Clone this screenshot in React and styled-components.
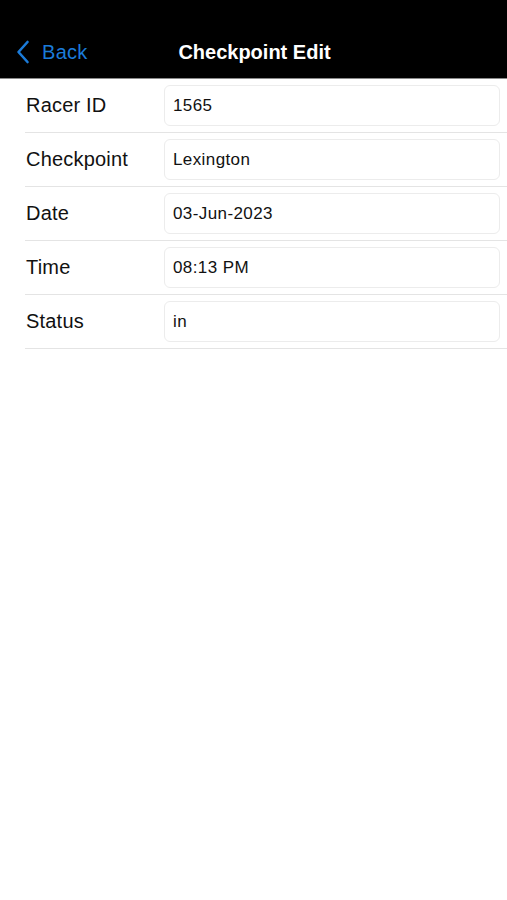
import React from "react";
import styled, { createGlobalStyle } from "styled-components";

const GlobalStyle = createGlobalStyle`
  body {
    margin: 0;
    background: #fff;
    font-family: "Liberation Sans", Arial, sans-serif;
  }
`;

const fields = [
  { label: "Racer ID", value: "1565" },
  { label: "Checkpoint", value: "Lexington" },
  { label: "Date", value: "03-Jun-2023" },
  { label: "Time", value: "08:13 PM" },
  { label: "Status", value: "in" },
];

function App() {
  return (
    <Screen>
      <GlobalStyle />
      <NavBar>
        <BackButton>
          <svg width="14" height="24" viewBox="0 0 14 24">
            <polyline
              points="11.5,2 2.5,12 11.5,22"
              fill="none"
              stroke="#1b7bd9"
              strokeWidth="2.6"
              strokeLinecap="round"
              strokeLinejoin="round"
            />
          </svg>
          <span>Back</span>
        </BackButton>
        <Title>Checkpoint Edit</Title>
      </NavBar>
      <Form>
        {fields.map((f) => (
          <Row key={f.label}>
            <Label>{f.label}</Label>
            <Field>{f.value}</Field>
          </Row>
        ))}
      </Form>
    </Screen>
  );
}

export default App;

const Screen = styled.div`
  width: 507px;
  min-height: 900px;
  background: #fff;
`;

const NavBar = styled.div`
  height: 79px;
  background: #000;
  border-bottom: 1px solid #8a8a8a;
  position: relative;
  display: flex;
  align-items: flex-end;
  justify-content: center;
  padding-bottom: 14px;
  padding-left: 2px;
  box-sizing: border-box;
`;

const BackButton = styled.div`
  position: absolute;
  left: 16px;
  bottom: 14px;
  display: flex;
  align-items: center;
  gap: 12px;
  color: #1b7bd9;
  font-size: 20px;
  line-height: 24px;
  letter-spacing: 0.3px;

  svg {
    display: block;
  }
`;

const Title = styled.div`
  color: #fff;
  font-weight: bold;
  font-size: 20px;
  line-height: 24px;
`;

const Form = styled.div`
  padding-left: 25px;
`;

const Row = styled.div`
  height: 54px;
  display: flex;
  align-items: center;
  border-bottom: 1px solid #e4e4e4;
  box-sizing: border-box;
  padding-right: 7px;
`;

const Label = styled.div`
  width: 139px;
  padding-left: 1px;
  box-sizing: border-box;
  font-size: 20px;
  letter-spacing: 0.2px;
  color: #111;
`;

const Field = styled.div`
  flex: 1;
  height: 41px;
  display: flex;
  align-items: center;
  padding-left: 8px;
  border: 1px solid #ececec;
  border-radius: 6px;
  box-sizing: border-box;
  font-size: 17px;
  letter-spacing: 0.4px;
  color: #111;
`;
